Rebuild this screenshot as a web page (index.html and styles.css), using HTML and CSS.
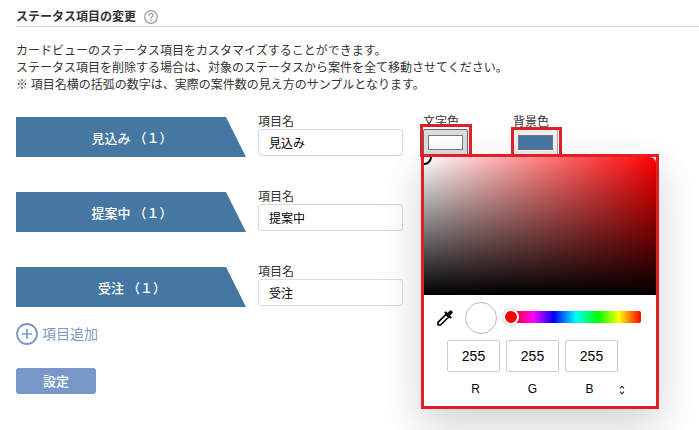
FILE: index.html
```html
<!DOCTYPE html>
<html lang="ja">
<head>
    <meta charset="UTF-8">
    <meta name="viewport" content="width=device-width, initial-scale=1.0">
    <title>ステータス項目の変更</title>
    <link rel="stylesheet" href="styles.css">
</head>
<body>
    <main class="settings">
        <header class="settings-header">
            <h1>ステータス項目の変更</h1>
            <a class="help" href="#" aria-label="ヘルプ">
                <svg width="14" height="14" viewBox="0 0 14 14" fill="none" stroke="#999" stroke-linecap="round">
                    <circle cx="7" cy="7" r="6.3" stroke-width="1.2"/>
                    <path d="M5 5.6C5 4.3 5.8 3.6 7 3.6s2 .7 2 1.8c0 1.4-2 1.5-2 3" stroke-width="1.2"/>
                    <circle cx="7" cy="10.4" r=".4" stroke-width=".6" fill="#999"/>
                </svg>
            </a>
        </header>
        <p class="description">
            カードビューのステータス項目をカスタマイズすることができます。<br>
            ステータス項目を削除する場合は、対象のステータスから案件を全て移動させてください。<br>
            ※ 項目名横の括弧の数字は、実際の案件数の見え方のサンプルとなります。
        </p>

        <form class="status-form">
            <div class="status-row">
                <div class="status-banner">見込み （１）</div>
                <div class="field">
                    <label for="name1">項目名</label>
                    <input type="text" id="name1" class="name-input" value="見込み">
                </div>
                <div class="field">
                    <label for="color1">文字色</label>
                    <input type="color" id="color1" class="color-input active" value="#ffffff">
                    <span class="mark mark-text"></span>

                    <div class="picker">
                        <div class="picker-area"><span class="picker-point"></span></div>
                        <div class="picker-tools">
                            <button type="button" class="dropper" aria-label="スポイト">
                                <svg width="18" height="18" viewBox="0 0 18 18">
                                    <path d="M2 16v-2.6L10 5.4l2.6 2.6-8 8H2z" fill="#fff" stroke="#000" stroke-width="1.6" stroke-linejoin="round"/>
                                    <path d="M8.6 3.8l1.2-1.2 1.7 1.7 2-2.1c.7-.7 1.6-.7 2.3 0s.7 1.6 0 2.3l-2.1 2 1.7 1.7-1.2 1.2z" fill="#000" stroke="#000" stroke-width=".8" stroke-linejoin="round"/>
                                </svg>
                            </button>
                            <span class="picker-preview"></span>
                            <input type="range" class="hue" min="0" max="360" value="0" aria-label="色相">
                        </div>
                        <div class="channel-inputs">
                            <input type="text" id="red" value="255">
                            <input type="text" id="green" value="255">
                            <input type="text" id="blue" value="255">
                        </div>
                        <div class="channel-labels">
                            <label for="red">R</label>
                            <label for="green">G</label>
                            <label for="blue">B</label>
                            <button type="button" class="format" aria-label="形式の切り替え">
                                <svg width="6" height="10" viewBox="0 0 6 10" fill="none" stroke="#222" stroke-width="1.1">
                                    <path d="M1 3.4L3 1.2l2 2.2M1 6.6l2 2.2 2-2.2"/>
                                </svg>
                            </button>
                        </div>
                    </div>
                </div>
                <div class="field">
                    <label for="color2">背景色</label>
                    <input type="color" id="color2" class="color-input" value="#4677a3">
                    <span class="mark mark-back"></span>
                </div>
            </div>

            <div class="status-row">
                <div class="status-banner">提案中 （１）</div>
                <div class="field">
                    <label for="name2">項目名</label>
                    <input type="text" id="name2" class="name-input" value="提案中">
                </div>
            </div>

            <div class="status-row">
                <div class="status-banner">受注 （１）</div>
                <div class="field">
                    <label for="name3">項目名</label>
                    <input type="text" id="name3" class="name-input" value="受注">
                </div>
            </div>

            <button type="button" class="add-button">
                <svg width="22" height="22" viewBox="0 0 22 22" fill="none" stroke="#7c98c8">
                    <circle cx="11" cy="11" r="10" stroke-width="1.8"/>
                    <path d="M11 6v10M6 11h10" stroke-width="1.6"/>
                </svg>
                <span>項目追加</span>
            </button>
            <button type="submit" class="submit-button">設定</button>
        </form>
    </main>
</body>
</html>
```
FILE: styles.css
```css
* {
    box-sizing: border-box;
}
body {
    margin: 0;
    background: #fff;
    color: #333;
    font-family: "Noto Sans CJK JP", sans-serif;
    font-size: 12px;
    line-height: 17px;
}
input,
button {
    font-family: inherit;
    margin: 0;
}
button {
    cursor: pointer;
}
.settings {
    min-height: 100vh;
    padding: 8px 0 0 16px;
}
.settings-header {
    display: flex;
    align-items: flex-start;
    gap: 8px;
    height: 19px;
    border-bottom: 1px solid #ddd;
}
h1 {
    margin: 0;
    font-size: 12px;
    font-weight: 700;
    line-height: 16px;
}
.help {
    display: flex;
    padding-top: 2px;
}
.description {
    margin: 14px 0 21px;
}

/* status rows */
.status-row {
    display: grid;
    grid-template-columns: 242px 165px 90px 50px;
    height: 75px;
    align-items: start;
}
.status-banner {
    width: 230px;
    height: 40px;
    margin-top: 4px;
    padding-left: 2px;
    background: #4677a3;
    color: #fff;
    font-size: 13px;
    font-weight: 500;
    line-height: 42px;
    text-align: center;
    clip-path: polygon(0 0, 210px 0, 100% 100%, 0 100%);
}
.field {
    position: relative;
    display: flex;
    flex-direction: column;
    align-items: flex-start;
}
.field > label {
    height: 16px;
    line-height: 15px;
}
.name-input {
    width: 145px;
    height: 27px;
    padding: 0 10px;
    border: 1px solid #d5dae8;
    border-radius: 3px;
    background: #fff;
    color: #000;
    font-size: 12px;
}
.color-input {
    width: 45px;
    height: 27px;
    padding: 5px 4px;
    border: 1px solid #aaa;
    border-radius: 2px;
    background: #efefef;
}
.color-input.active {
    border-color: #666;
    background: #ddd;
}
.color-input::-webkit-color-swatch-wrapper {
    padding: 0;
}
.color-input::-webkit-color-swatch {
    border: 1px solid #777;
    border-radius: 0;
}

/* red frames */
.mark {
    position: absolute;
    border: 3px solid #df202a;
    z-index: 3;
}
.mark-text {
    top: 11px;
    left: -3px;
    width: 52px;
    height: 33px;
}
.mark-back {
    top: 14px;
    left: -2px;
    width: 51px;
    height: 30px;
}

/* color picker */
.picker {
    position: absolute;
    top: 41px;
    left: -2px;
    z-index: 2;
    width: 238px;
    border: 3px solid #df202a;
    background: #fff;
    color: #000;
    font-family: "Liberation Sans", Arial, sans-serif;
    box-shadow: 0 16px 40px rgba(0, 0, 0, 0.18);
}
.picker-area {
    position: relative;
    height: 138px;
    overflow: hidden;
    border-radius: 0 6px 0 0;
    background: linear-gradient(to top, #000, transparent), linear-gradient(to right, #fff, #f00);
}
.picker-point {
    position: absolute;
    top: -8px;
    left: -8px;
    width: 16px;
    height: 16px;
    border: 2px solid #000;
    border-radius: 50%;
    background: #fff;
}
.picker-tools {
    display: flex;
    align-items: center;
    height: 45px;
    padding: 0 15px 0 12px;
}
.dropper,
.format {
    display: flex;
    padding: 0;
    border: none;
    background: none;
}
.picker-preview {
    width: 32px;
    height: 32px;
    margin-left: 11px;
    border: 1px solid #bbb;
    border-radius: 50%;
    background: #fff;
}
.hue {
    appearance: none;
    flex: 1;
    min-width: 0;
    height: 12px;
    margin: 0 0 2px 14px;
    border-radius: 2px;
    background: linear-gradient(to left, #f00, #ff0 17%, #0f0 33%, #0ff 50%, #00f 67%, #f0f 83%, #f00);
}
.hue::-webkit-slider-thumb {
    appearance: none;
    width: 16px;
    height: 16px;
    margin-left: -8px;
    border: 2px solid #fff;
    border-radius: 50%;
    background: #f00;
    box-shadow: 0 0 2px rgba(0, 0, 0, 0.4);
}
.channel-inputs {
    display: flex;
    gap: 6px;
    padding-left: 23px;
}
.channel-inputs input {
    width: 53px;
    height: 32px;
    padding: 0;
    border: 1px solid #ccc;
    border-radius: 2px;
    background: #fff;
    color: #000;
    font-size: 14px;
    text-align: center;
}
.channel-labels {
    display: flex;
    align-items: center;
    padding: 9px 0 8px 23px;
}
.channel-labels label {
    width: 57px;
    font-size: 12px;
    text-align: center;
}
.format {
    margin-left: 1px;
}

/* buttons */
.add-button {
    display: flex;
    align-items: center;
    gap: 4px;
    margin-top: -15px;
    padding: 0;
    border: none;
    background: none;
    color: #7c98c8;
    font-size: 14px;
    line-height: 20px;
}
.add-button span {
    padding-bottom: 2px;
}
.submit-button {
    display: block;
    width: 80px;
    height: 26px;
    margin-top: 23px;
    padding: 0 0 2px;
    border: none;
    border-radius: 3px;
    background: #7a97ca;
    color: #fff;
    font-size: 13px;
    font-weight: 500;
}
```
